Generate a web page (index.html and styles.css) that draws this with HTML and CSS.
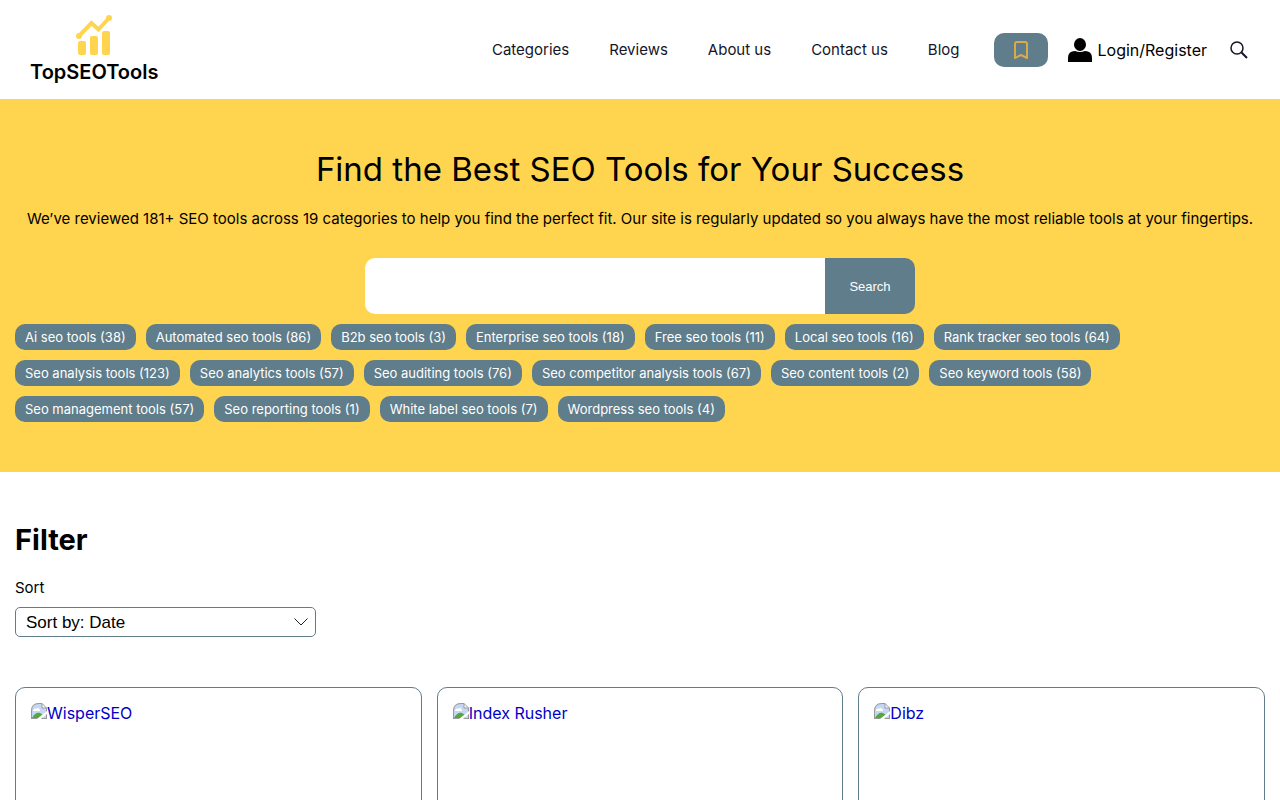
FILE: index.html
```html
<!doctype html>
<html lang="en">
<head>
    <meta charset="UTF-8">
    <meta name="viewport" content="width=device-width, initial-scale=1.0">
    <title>TopSEOTools</title>
    <link rel="stylesheet" href="styles.css">
</head>
<body>

<!-- Shared icons -->
<svg class="sprite" aria-hidden="true">
    <symbol id="broken-image" viewBox="0 0 16 16">
        <path d="M0 16V8Q0 0 8 0h3l5 5v11z" fill="#c6d7f4"/>
        <path d="M2 8c0-2 2-3 3-2 1-2 4-1 4 2z" fill="#fff"/>
        <path d="M1 15c2-4 5-6 8-5l3 2v3z" fill="#55a83e"/>
        <path d="M11 0l5 5h-5z" fill="#fff"/>
        <path d="M0 15.500h16M.5 16V8Q.5 .5 8 .5h3l4.500 4.500v11M11 .5V5h4.500" fill="none" stroke="#999"/>
        <path d="M6 16l10-8v3l-6 5z" fill="#fff"/>
    </symbol>
</svg>

<header class="header">
    <a class="logo" href="#">
        <svg width="38" height="41" viewBox="0 1 38 41" aria-hidden="true">
            <g fill="#ffd54f">
                <rect x="3" y="27" width="8" height="14" rx="2"/>
                <rect x="15" y="22" width="8" height="19" rx="2"/>
                <rect x="27" y="17" width="8" height="24" rx="2"/>
                <circle cx="4" cy="22" r="3"/>
                <circle cx="34" cy="4" r="3"/>
            </g>
            <path d="M4 22L16.500 9l7 6.500L34 4" fill="none" stroke="#ffd54f" stroke-width="4"/>
        </svg>
        <span>TopSEOTools</span>
    </a>
    <nav class="nav">
        <a href="#">Categories</a>
        <a href="#">Reviews</a>
        <a href="#">About us</a>
        <a href="#">Contact us</a>
        <a href="#">Blog</a>
    </nav>
    <a class="bookmark" href="#" aria-label="Bookmarks">
        <svg width="16" height="18" viewBox="0 0 16 18" fill="none" stroke="#d9a94a" stroke-width="2" stroke-linejoin="round" aria-hidden="true">
            <path d="M2 3q0-2 2-2h8q2 0 2 2v14l-6-3-6 3z"/>
        </svg>
    </a>
    <a class="login" href="#">
        <svg width="24" height="24" viewBox="0 0 24 24" aria-hidden="true">
            <ellipse cx="12" cy="6.500" rx="6" ry="6.500"/>
            <path d="M0 24v-4q0-7 7-7 5 2 10 0 7 0 7 7v4z"/>
        </svg>
        <span>Login/Register</span>
    </a>
    <button class="search-toggle" type="button" aria-label="Open search">
        <svg width="18" height="18" viewBox="0 0 18 18" fill="none" stroke="#14142b" aria-hidden="true">
            <circle cx="7" cy="7" r="6" stroke-width="1.500"/>
            <path d="M11.500 11.500L17 17" stroke-width="2"/>
        </svg>
    </button>
</header>

<main>
    <section class="hero">
        <h1>Find the Best SEO Tools for Your Success</h1>
        <p>We’ve reviewed 181+ SEO tools across 19 categories to help you find the perfect fit. Our site is regularly updated so you always have the most reliable tools at your fingertips.</p>
        <form class="search">
            <input type="text" aria-label="Search tools">
            <button type="submit">Search</button>
        </form>
        <div class="tags">
            <a href="#">Ai seo tools (38)</a>
            <a href="#">Automated seo tools (86)</a>
            <a href="#">B2b seo tools (3)</a>
            <a href="#">Enterprise seo tools (18)</a>
            <a href="#">Free seo tools (11)</a>
            <a href="#">Local seo tools (16)</a>
            <a href="#">Rank tracker seo tools (64)</a>
            <a href="#">Seo analysis tools (123)</a>
            <a href="#">Seo analytics tools (57)</a>
            <a href="#">Seo auditing tools (76)</a>
            <a href="#">Seo competitor analysis tools (67)</a>
            <a href="#">Seo content tools (2)</a>
            <a href="#">Seo keyword tools (58)</a>
            <a href="#">Seo management tools (57)</a>
            <a href="#">Seo reporting tools (1)</a>
            <a href="#">White label seo tools (7)</a>
            <a href="#">Wordpress seo tools (4)</a>
        </div>
    </section>

    <section class="filter">
        <h2>Filter</h2>
        <label for="sort">Sort</label>
        <div class="select">
            <select id="sort">
                <option>Sort by: Date</option>
            </select>
            <svg width="14" height="8" viewBox="0 0 14 8" fill="none" stroke="#222" aria-hidden="true">
                <path d="M.5 .5L7 7l6.500-6.500"/>
            </svg>
        </div>
    </section>

    <section class="cards">
        <article class="card">
            <a href="#"><svg width="16" height="16" aria-hidden="true"><use href="#broken-image"/></svg>WisperSEO</a>
        </article>
        <article class="card">
            <a href="#"><svg width="16" height="16" aria-hidden="true"><use href="#broken-image"/></svg>Index Rusher</a>
        </article>
        <article class="card">
            <a href="#"><svg width="16" height="16" aria-hidden="true"><use href="#broken-image"/></svg>Dibz</a>
        </article>
    </section>
</main>

</body>
</html>
```
FILE: styles.css
```css
* {
    box-sizing: border-box;
}
body {
    margin: 0;
    font-family: Inter, sans-serif;
    font-size: 15px;
    line-height: 24px;
    color: #000;
    background-color: #fff;
}
a {
    text-decoration: none;
}
h1, h2, p {
    margin: 0;
}
.sprite {
    display: none;
}
.header {
    display: flex;
    align-items: center;
    padding: 15px 32px 14px 30px;
}
.logo {
    display: flex;
    flex-direction: column;
    align-items: center;
    gap: 4px;
    margin-right: auto;
    padding-bottom: 1px;
    font-size: 20px;
    font-weight: 600;
    color: #000;
}
.nav {
    display: flex;
    gap: 40px;
    margin-right: 34px;
}
.nav a {
    color: #14142b;
}
.bookmark {
    display: flex;
    align-items: center;
    justify-content: center;
    width: 54px;
    height: 34px;
    margin-right: 20px;
    border-radius: 10px;
    background-color: #607d8b;
}
.login {
    display: flex;
    align-items: center;
    gap: 6px;
    margin-right: 23px;
    font-size: 16px;
    color: #000;
}
.search-toggle {
    display: flex;
    padding: 0;
    border: none;
    background: none;
    cursor: pointer;
}
.hero {
    padding: 50px 15px;
    background-color: #ffd54f;
    text-align: center;
}
.hero h1 {
    font-size: 33px;
    font-weight: 400;
    line-height: 40px;
}
.hero p {
    margin: 18px 0 27px;
}
.search {
    display: flex;
    max-width: 550px;
    height: 56px;
    margin: 0 auto 10px;
    border-radius: 10px;
    overflow: hidden;
}
.search input {
    flex: 1;
    padding: 0 20px;
    border: none;
    font-size: 16px;
}
.search button {
    width: 90px;
    border: none;
    font-family: "Liberation Sans", Arial, sans-serif;
    font-size: 13px;
    color: #fff;
    background-color: #607d8b;
    cursor: pointer;
}
.tags {
    display: flex;
    flex-wrap: wrap;
    gap: 10px;
}
.tags a {
    padding: 0 10px;
    border-radius: 10px;
    font-size: 13px;
    line-height: 26px;
    color: #fff;
    background-color: #607d8b;
}
.filter {
    padding: 50px 15px;
}
.filter h2 {
    margin-bottom: 18px;
    font-size: 29px;
    font-weight: 700;
    line-height: 36px;
}
.filter label {
    display: block;
    margin-bottom: 7px;
}
.select {
    position: relative;
    max-width: 301px;
}
.select select {
    display: block;
    width: 100%;
    height: 30px;
    padding: 0 10px;
    border: 1px solid #607d8b;
    border-radius: 5px;
    font-family: "Liberation Sans", Arial, sans-serif;
    font-size: 17px;
    color: #000;
    background-color: #fff;
    appearance: none;
}
.select svg {
    position: absolute;
    top: 11px;
    right: 8px;
    pointer-events: none;
}
.cards {
    display: grid;
    grid-template-columns: repeat(3, 1fr);
    gap: 15px;
    padding: 0 15px 50px;
}
.card {
    min-height: 400px;
    padding: 15px;
    border: 1px solid #607d8b;
    border-radius: 10px;
}
.card a {
    display: flex;
    font-size: 16px;
    line-height: 20px;
    color: #0000c8;
}
```
